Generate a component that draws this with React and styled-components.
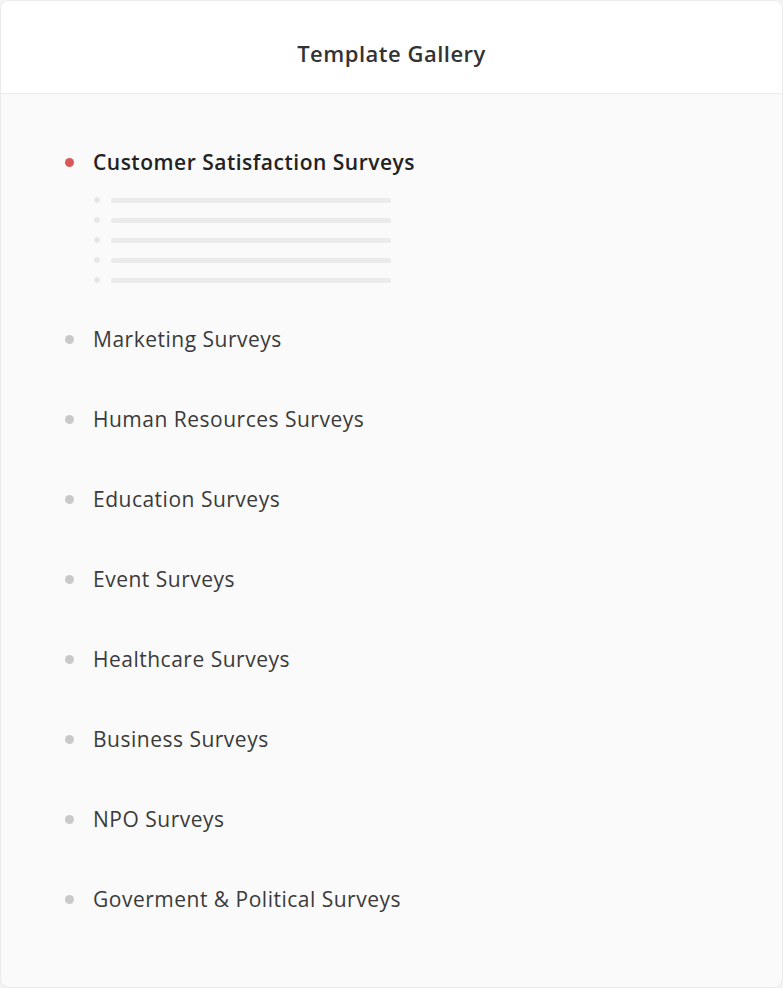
import React from 'react';
import styled, { createGlobalStyle } from 'styled-components';

const GlobalStyle = createGlobalStyle`
  html, body {
    margin: 0;
    padding: 0;
    background: #f3f3f3;
  }
  body {
    font-family: "Open Sans", Lato, Arial, sans-serif;
  }
`;

const Card = styled.div`
  width: 783px;
  height: 988px;
  box-sizing: border-box;
  border: 1px solid #ebebeb;
  border-radius: 9px;
  overflow: hidden;
  background: #fafafa;
  display: flex;
  flex-direction: column;
`;

const Header = styled.div`
  height: 93px;
  flex-shrink: 0;
  box-sizing: border-box;
  background: #ffffff;
  border-bottom: 1px solid #ebebeb;
  display: flex;
  align-items: center;
  justify-content: center;
  font-size: 22px;
  font-weight: 600;
  letter-spacing: 0.5px;
  color: #333333;
  padding-top: 12px;
`;

const Body = styled.div`
  flex: 1;
  padding: 48px 0 0 64px;
`;

const Row = styled.div`
  height: ${(p) => (p.$active ? 40 : 80)}px;
  display: flex;
  align-items: center;
  font-size: 21px;
  letter-spacing: 0.5px;
  font-weight: ${(p) => (p.$active ? 600 : 400)};
  color: ${(p) => (p.$active ? '#222222' : '#3a3a3a')};
`;

const Dot = styled.span`
  width: 9px;
  height: 9px;
  border-radius: 50%;
  background: ${(p) => (p.$active ? '#d95858' : '#c9c9c9')};
  margin-right: 19px;
  flex-shrink: 0;
`;

const Skeleton = styled.div`
  padding: 16px 0 17px 29px;
  display: flex;
  flex-direction: column;
  gap: 16px;
`;

const SkeletonLine = styled.div`
  display: flex;
  align-items: center;
  height: 4px;
`;

const SkeletonDot = styled.span`
  width: 6px;
  height: 6px;
  flex-shrink: 0;
  border-radius: 50%;
  background: #e8e8e8;
  margin-right: 11px;
`;

const SkeletonBar = styled.span`
  width: 280px;
  height: 5px;
  border-radius: 3px;
  background: #ebebeb;
`;

const categories = [
  'Marketing Surveys',
  'Human Resources Surveys',
  'Education Surveys',
  'Event Surveys',
  'Healthcare Surveys',
  'Business Surveys',
  'NPO Surveys',
  'Goverment & Political Surveys',
];

export default function App() {
  return (
    <>
      <GlobalStyle />
      <Card>
        <Header>Template Gallery</Header>
        <Body>
          <Row $active>
            <Dot $active />
            Customer Satisfaction Surveys
          </Row>
          <Skeleton>
            {[0, 1, 2, 3, 4].map((i) => (
              <SkeletonLine key={i}>
                <SkeletonDot />
                <SkeletonBar />
              </SkeletonLine>
            ))}
          </Skeleton>
          {categories.map((name) => (
            <Row key={name}>
              <Dot />
              {name}
            </Row>
          ))}
        </Body>
      </Card>
    </>
  );
}
